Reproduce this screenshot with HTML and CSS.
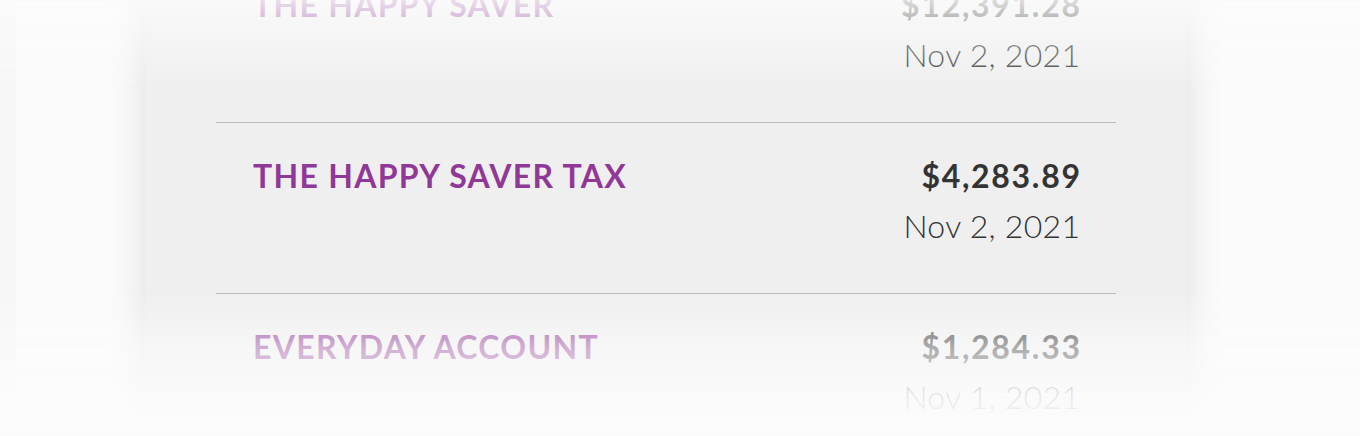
FILE: index.html
```html
<!DOCTYPE html>
<html lang="en">
<head>
    <meta charset="UTF-8">
    <meta name="viewport" content="width=device-width, initial-scale=1.0">
    <title>Accounts</title>
    <link rel="stylesheet" href="styles.css">
</head>
<body>
    <div class="frame">
        <div class="card">
            <div class="account">
                <div class="account-name">THE HAPPY SAVER</div>
                <div class="account-info">
                    <div class="amount">$12,391.28</div>
                    <div class="date">Nov 2, 2021</div>
                </div>
            </div>
            <div class="account">
                <div class="account-name">THE HAPPY SAVER TAX</div>
                <div class="account-info">
                    <div class="amount">$4,283.89</div>
                    <div class="date">Nov 2, 2021</div>
                </div>
            </div>
            <div class="account">
                <div class="account-name">EVERYDAY ACCOUNT</div>
                <div class="account-info">
                    <div class="amount">$1,284.33</div>
                    <div class="date">Nov 1, 2021</div>
                </div>
            </div>
        </div>
    </div>
</body>
</html>
```

FILE: styles.css
```css
/* General Styles */
html, body {
    height: 100%;
}

body {
    margin: 0;
    padding: 0 0 0 16px;
    background-color: #f7f7f7;
    font-family: Lato, "Open Sans", sans-serif;
    color: #333333;
    overflow: hidden;
}

/* fade the list out at the top and bottom */
body::before,
body::after {
    content: "";
    position: fixed;
    left: 0;
    right: 0;
    pointer-events: none;
    z-index: 2;
}

body::before {
    top: 0;
    height: 100px;
    background: linear-gradient(to bottom, rgba(251, 251, 251, 0.85) 0, rgba(251, 251, 251, 0.35) 52px, rgba(251, 251, 251, 0) 95px);
}

body::after {
    bottom: 0;
    height: 146px;
    background: linear-gradient(to bottom, rgba(251, 251, 251, 0) 0, rgba(251, 251, 251, 0.6) 56px, rgba(251, 251, 251, 0.9) 106px, rgba(251, 251, 251, 1) 146px);
}

.frame {
    height: 100%;
    box-sizing: border-box;
    background-color: #fbfbfb;
    border-top: 1px solid #ededed;
    border-bottom: 1px solid #ededed;
    padding-left: 129px;
}

.card {
    width: 1041px;
    margin-top: -49px;
    padding-bottom: 60px;
    background-color: #efefef;
    box-shadow: 0 0 36px rgba(0, 0, 0, 0.12);
}

.account {
    display: flex;
    justify-content: space-between;
    margin: 0 70px 0 71px;
    padding: 28px 36px 42px 37px;
    border-bottom: 1px solid #bdbdbd;
}

.account:last-child {
    border-bottom: none;
}

.account-name {
    font-size: 32px;
    line-height: 50px;
    font-weight: 700;
    color: #8f3897;
    letter-spacing: 1.3px;
}

.account-info {
    text-align: right;
}

.amount {
    font-size: 32px;
    line-height: 50px;
    font-weight: 700;
    color: #333333;
    letter-spacing: 1.7px;
    margin-right: -1.7px;
}

.date {
    font-size: 32px;
    line-height: 50px;
    font-weight: 300;
    color: #333333;
    letter-spacing: 0.3px;
    margin-right: -0.3px;
}
```
